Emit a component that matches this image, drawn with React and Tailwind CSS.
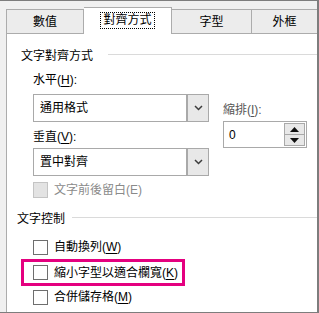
import React from "react";

const font = { fontFamily: '"Liberation Sans", "Noto Sans CJK TC", sans-serif' };

function U({ children }) {
  return <span className="underline underline-offset-2">{children}</span>;
}

function Chevron() {
  return (
    <svg width="9" height="6" viewBox="0 0 9 6">
      <path d="M1 1 L4.5 4.5 L8 1" fill="none" stroke="#3c3c3c" strokeWidth="1.5" />
    </svg>
  );
}

function Select({ value }) {
  return (
    <div className="flex h-[28px] w-[176px] border border-[#a9a9a9] bg-white">
      <div className="flex flex-1 items-center pl-[6px] text-[12px] text-black">{value}</div>
      <div className="flex w-[22px] items-center justify-center border-l-2 border-[#a9a9a9] bg-[#e8e8e8]">
        <Chevron />
      </div>
    </div>
  );
}

function Box({ disabled }) {
  return (
    <div
      className={
        disabled
          ? "h-[16px] w-[15px] shrink-0 border border-[#c4c4c4] bg-[#e3e3e3]"
          : "h-[15px] w-[15px] shrink-0 border border-[#6e6e6e] bg-white"
      }
    />
  );
}

function Check({ children, disabled }) {
  return (
    <div className="flex h-[16px] items-center">
      <Box disabled={disabled} />
      <span className={"ml-[6px] text-[12px] leading-[16px] " + (disabled ? "text-[#8a8a8a]" : "text-black")}>
        {children}
      </span>
    </div>
  );
}

export default function App() {
  return (
    <div
      className="flex h-[313px] w-[319px] flex-col overflow-hidden border-t border-r-2 border-b border-[#7d7d7d] bg-[#f0f0f0]"
      style={font}
    >
      {/* tabs */}
      <div className="flex h-[32px] shrink-0 items-end pl-[6px] text-[12px] text-black">
        <div className="flex h-[24px] w-[78px] items-center justify-center border border-b-0 border-[#acacac] bg-[#ececec] pt-[1px]">
          數值
        </div>
        <div className="relative z-10 mb-[-1px] flex h-[27px] w-[88px] items-center justify-center border border-b-0 border-l-0 border-[#acacac] bg-white pb-[1px]">
          <span className="border border-dotted border-black px-[2px] leading-[15px]">對齊方式</span>
        </div>
        <div className="flex h-[24px] w-[80px] items-center justify-center border border-b-0 border-l-0 border-[#acacac] bg-[#ececec] pt-[1px]">
          字型
        </div>
        <div className="flex h-[24px] flex-1 items-center justify-center border border-b-0 border-l-0 border-r-0 border-[#acacac] bg-[#ececec] pt-[1px]">
          外框
        </div>
      </div>

      {/* panel */}
      <div className="ml-[6px] flex flex-1 flex-col border-t border-l border-[#acacac] bg-white pl-[14px]">
        {/* section 1 header */}
        <div className="mt-[14px] flex h-[16px] items-center">
          <span className="text-[12px] leading-[16px] text-black">文字對齊方式</span>
          <div className="mb-[3px] ml-[15px] h-px flex-1 bg-[#dadada]" />
        </div>

        <div className="ml-[12px] flex">
          {/* left column */}
          <div className="flex flex-col">
            <div className="mt-[8px] h-[16px] text-[12px] leading-[16px] text-black">
              水平(<U>H</U>):
            </div>
            <div className="mt-[6px]">
              <Select value="通用格式" />
            </div>
            <div className="mt-[7px] h-[16px] text-[12px] leading-[16px] text-black">
              垂直(<U>V</U>):
            </div>
            <div className="mt-[3px]">
              <Select value="置中對齊" />
            </div>
            <div className="mt-[6px]">
              <Check disabled>文字前後留白(E)</Check>
            </div>
          </div>

          {/* right column */}
          <div className="ml-[14px] flex flex-col">
            <div className="mt-[38px] h-[16px] text-[12px] leading-[16px] text-[#555]">
              縮排(<U>I</U>):
            </div>
            <div className="mt-[3px] flex h-[27px] w-[84px] border border-[#a9a9a9] bg-white">
              <div className="flex flex-1 items-center pl-[5px] text-[12px] text-black">0</div>
              <div className="my-[1px] mr-[1px] flex w-[21px] flex-col">
                <div className="flex flex-1 items-center justify-center border border-[#a9a9a9] bg-[#e8e8e8]">
                  <svg width="9" height="5" viewBox="0 0 9 5">
                    <path d="M0 5 L4.5 0 L9 5 Z" fill="#111" />
                  </svg>
                </div>
                <div className="flex flex-1 items-center justify-center border border-t-0 border-[#a9a9a9] bg-[#e8e8e8]">
                  <svg width="9" height="5" viewBox="0 0 9 5">
                    <path d="M0 0 L4.5 5 L9 0 Z" fill="#111" />
                  </svg>
                </div>
              </div>
            </div>
          </div>
        </div>

        {/* section 2 header */}
        <div className="ml-[-4px] mt-[13px] flex h-[16px] items-center">
          <span className="text-[12px] leading-[16px] text-black">文字控制</span>
          <div className="mb-[3px] ml-[7px] h-px flex-1 bg-[#dadada]" />
        </div>

        <div className="ml-[12px] mt-[12px]">
          <Check>
            自動換列(<U>W</U>)
          </Check>
        </div>
        <div className="mt-[4px] flex h-[27px] w-[164px] items-center border-[3px] border-[#e4007f] pl-[9px]">
          <Check>
            縮小字型以適合欄寬(<U>K</U>)
          </Check>
        </div>
        <div className="ml-[12px] mt-[3px]">
          <Check>
            合併儲存格(<U>M</U>)
          </Check>
        </div>
      </div>
    </div>
  );
}
